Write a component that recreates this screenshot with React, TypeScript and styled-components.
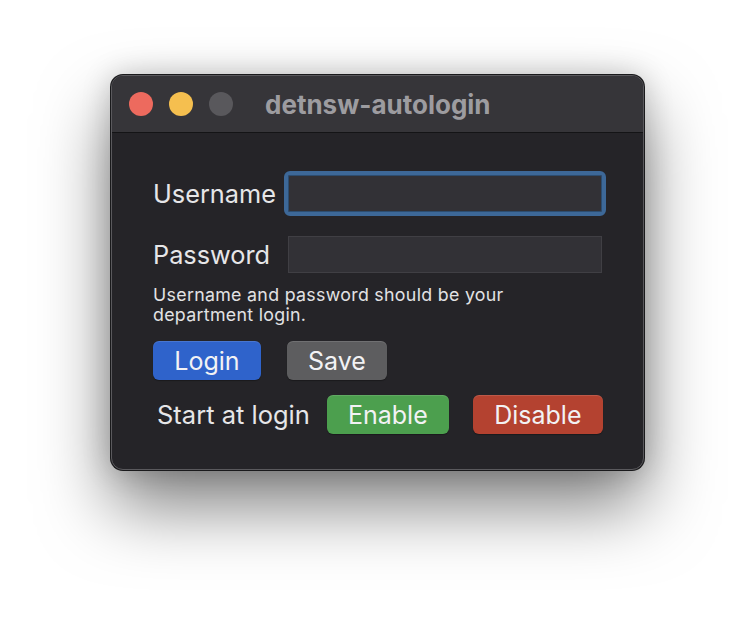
import React from 'react';
import styled, {createGlobalStyle} from 'styled-components';

const GlobalStyle = createGlobalStyle`
  html, body {
    margin: 0;
    padding: 0;
    background: #ffffff;
  }
  body {
    font-family: Inter, "Noto Sans", "Liberation Sans", sans-serif;
    -webkit-font-smoothing: antialiased;
  }
`

const Page = styled.div`
  width: 756px;
  height: 618px;
  padding: 75px 0 0 111px;
  box-sizing: border-box;
`
const Window = styled.div`
  width: 533px;
  height: 395px;
  box-sizing: border-box;
  border-radius: 12px;
  border: 1px solid #5a595d;
  background: #252428;
  overflow: hidden;
  box-shadow: 0 0 0 1px #1a1a1c, 0 36px 70px rgba(0, 0, 0, 0.5), 0 0 30px rgba(0, 0, 0, 0.2);
  display: flex;
  flex-direction: column;
`
const TitleBar = styled.div`
  height: 56px;
  flex-shrink: 0;
  background: #363539;
  border-bottom: 1px solid #141416;
  display: flex;
  align-items: center;
  padding-left: 17px;
  gap: 16px;
`
const Light = styled.span<{ $color: string }>`
  width: 24px;
  height: 24px;
  border-radius: 50%;
  background: ${p => p.$color};
`
const Title = styled.div`
  margin-left: 16px;
  font-size: 26px;
  font-weight: 700;
  color: #9d9ca0;
`
const Content = styled.div`
  padding: 42px 41px 0 41px;
  display: flex;
  flex-direction: column;
`
const Form = styled.div`
  display: grid;
  grid-template-columns: 135px 314px;
  row-gap: 24px;
  align-items: center;
`
const Label = styled.label`
  font-size: 25.3px;
  color: #e6e6e8;
  white-space: nowrap;
`
const Field = styled.input<{ $focused?: boolean }>`
  height: 37px;
  box-sizing: border-box;
  margin: 0;
  padding: 0 8px;
  background: #323136;
  border: 1px solid ${p => p.$focused ? '#2d4d70' : '#403f44'};
  color: #e6e6e8;
  font-size: 18px;
  outline: ${p => p.$focused ? '4px solid #3d6898' : 'none'};
  outline-offset: 0;
  border-radius: ${p => p.$focused ? '2px' : '0'};
`
const Hint = styled.p`
  margin: 12px 0 0 0;
  font-size: 17.8px;
  line-height: 20px;
  color: #e2e2e4;
  width: 410px;
  letter-spacing: 0.3px;
`
const ButtonRow = styled.div`
  display: flex;
  align-items: center;
  gap: 26px;
  margin-top: 16px;
`
const StartRow = styled.div`
  display: flex;
  align-items: center;
  gap: 24px;
  margin-top: 15px;
  padding-left: 4px;
`
const StartLabel = styled.span`
  font-size: 25.5px;
  color: #e6e6e8;
  white-space: nowrap;
  flex-shrink: 0;
  margin-right: -7px;
`
const Button = styled.button<{ $bg: string; $width: number }>`
  flex-shrink: 0;
  width: ${p => p.$width}px;
  height: 39px;
  border: none;
  border-radius: 6px;
  background: ${p => p.$bg};
  color: #f2f2f4;
  font-family: inherit;
  font-size: 25px;
  padding: 0;
  box-shadow: inset 0 1px 0 rgba(255, 255, 255, 0.12), 0 1px 1px rgba(0, 0, 0, 0.3);
`

export default function App() {
  return (
    <Page>
      <GlobalStyle/>
      <Window>
        <TitleBar>
          <Light $color="#ed6a5e"/>
          <Light $color="#f5bf4f"/>
          <Light $color="#59585c"/>
          <Title>detnsw-autologin</Title>
        </TitleBar>
        <Content>
          <Form>
            <Label>Username</Label>
            <Field $focused/>
            <Label>Password</Label>
            <Field type="password"/>
          </Form>
          <Hint>Username and password should be your department login.</Hint>
          <ButtonRow>
            <Button $bg="#2f63cb" $width={108}>Login</Button>
            <Button $bg="#5d5d5f" $width={100}>Save</Button>
          </ButtonRow>
          <StartRow>
            <StartLabel>Start at login</StartLabel>
            <Button $bg="#4c9f4e" $width={122}>Enable</Button>
            <Button $bg="#b44230" $width={130}>Disable</Button>
          </StartRow>
        </Content>
      </Window>
    </Page>
  );
}
